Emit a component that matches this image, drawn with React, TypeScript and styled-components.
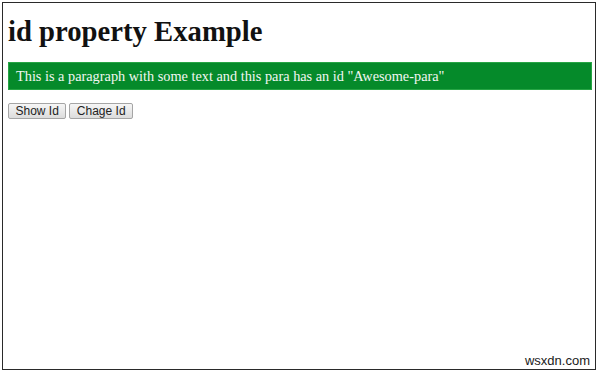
import styled, { createGlobalStyle } from "styled-components";

const GlobalStyle = createGlobalStyle`
  html, body {
    margin: 0;
    padding: 0;
    background: #ffffff;
  }
`;

const Frame = styled.div`
  position: relative;
  box-sizing: border-box;
  margin: 2px 0 0 2px;
  width: 594px;
  height: 368px;
  border: 1px solid #2a2a2a;
  padding: 0 3px 0 5px;
  font-family: "Liberation Serif", "Times New Roman", serif;
  color: #111;
`;

const Heading = styled.h1`
  margin: 0;
  padding-top: 11px;
  font-size: 28.7px;
  line-height: 34px;
  font-weight: bold;
`;

const Para = styled.p`
  margin: 14px 0 0;
  background: #058a2a;
  color: #f2f7f2;
  font-size: 14.3px;
  line-height: 26px;
  padding: 0 7px;
  border: 1px solid #27a545;
`;

const ButtonRow = styled.div`
  display: flex;
  gap: 3px;
  margin-top: 13px;
`;

const Button = styled.button`
  font-family: "Liberation Sans", Arial, sans-serif;
  font-size: 12px;
  color: #222;
  height: 16px;
  padding: 0 6.5px;
  border: 1px solid #a5a5a5;
  border-radius: 2px;
  background: linear-gradient(#f6f6f6, #dcdcdc);
  line-height: 14px;
`;

const Watermark = styled.span`
  position: absolute;
  right: 5px;
  bottom: 1px;
  font-family: "Liberation Sans", Arial, sans-serif;
  font-size: 13px;
  color: #1a1a1a;
`;

export default function App() {
  return (
    <>
      <GlobalStyle />
      <Frame>
        <Heading>id property Example</Heading>
        <Para>This is a paragraph with some text and this para has an id "Awesome-para"</Para>
        <ButtonRow>
          <Button>Show Id</Button>
          <Button>Chage Id</Button>
        </ButtonRow>
        <Watermark>wsxdn.com</Watermark>
      </Frame>
    </>
  );
}
